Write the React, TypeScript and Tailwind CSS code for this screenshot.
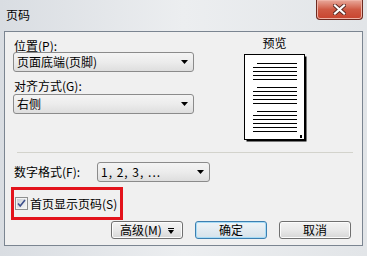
import React from "react";

const FONT = { fontFamily: '"Noto Sans CJK SC", "Noto Sans", sans-serif' };

function DropArrow() {
  return (
    <svg width="7" height="4" viewBox="0 0 7 4" className="shrink-0">
      <path d="M0 0h7L3.5 4z" fill="#000" />
    </svg>
  );
}

function Combo({ text, className = "" }: { text: string; className?: string }) {
  return (
    <div
      className={`flex h-[20px] items-center justify-between rounded-[3px] border border-[#8b8b8b] bg-gradient-to-b from-[#f4f4f4] via-[#ececec] to-[#dedede] pl-[3px] pr-[5px] text-[12px] leading-[12px] text-black ${className}`}
    >
      <span>{text}</span>
      <DropArrow />
    </div>
  );
}

function Button({ children, primary }: { children: React.ReactNode; primary?: boolean }) {
  return (
    <div
      className={`flex h-[18px] w-[72px] items-center justify-center gap-[6px] rounded-[3px] border text-[12px] leading-[12px] text-black ${
        primary
          ? "border-[#3c7fb1] bg-gradient-to-b from-[#eef4f8] to-[#d6e2ea] shadow-[inset_0_0_0_1px_#a7dcf6]"
          : "border-[#707070] bg-gradient-to-b from-[#f3f3f3] via-[#e9e9e9] to-[#d6d6d6] shadow-[inset_0_0_0_1px_#fcfcfc]"
      }`}
    >
      {children}
    </div>
  );
}

function PreviewPage() {
  const groups = [
    [9, 13, 17, 21, 25],
    [33, 37, 41, 45, 49],
    [57, 61, 65, 69, 73, 77],
  ];
  return (
    <svg width="63" height="88" viewBox="0 0 63 88">
      <rect x="2.5" y="2.5" width="60" height="85" fill="#000" />
      <rect x="0.5" y="0.5" width="60" height="85" fill="#fff" stroke="#000" />
      {groups.map((g, gi) =>
        g.map((y, i) => (
          <line key={`${gi}-${i}`} x1={i === 0 ? 13 : 9} x2="53" y1={y + 0.5} y2={y + 0.5} stroke="#000" />
        ))
      )}
      <rect x="56" y="81" width="2" height="3" fill="#000" />
    </svg>
  );
}

function Checkbox() {
  return (
    <svg width="13" height="13" viewBox="0 0 13 13" className="shrink-0">
      <defs>
        <linearGradient id="cb" x1="0" y1="0" x2="1" y2="1">
          <stop offset="0" stopColor="#cbcfd5" />
          <stop offset="1" stopColor="#f6f6f6" />
        </linearGradient>
      </defs>
      <rect x="0.5" y="0.5" width="12" height="12" fill="#f4f4f4" stroke="#8e8f8f" />
      <rect x="2" y="2" width="9" height="9" fill="url(#cb)" />
      <path d="M3 6.5l2.2 2.5L10 3" fill="none" stroke="#3e4f8c" strokeWidth="1.6" />
    </svg>
  );
}

function AdvArrow() {
  return (
    <svg width="6" height="7" viewBox="0 0 6 7">
      <path d="M0 1.5h6" stroke="#000" />
      <path d="M0 3h6L3 7z" fill="#000" />
    </svg>
  );
}

export default function App() {
  return (
    <div
      className="flex h-[256px] w-[367px] flex-col overflow-hidden bg-gradient-to-r from-[#d9dde2] via-[#eceef0] to-[#e2e5e8]"
      style={FONT}
    >
      <div className="flex h-[31px] items-start justify-between pl-[6px] pr-[4px]">
        <span className="mt-[9px] text-[12px] leading-[12px] text-black">页码</span>
        <div className="flex h-[20px] w-[47px] items-center justify-center rounded-b-[4px] border border-t-0 border-[#6d2a20] bg-gradient-to-b from-[#e8a99c] via-[#cf5a44] to-[#c8432e] shadow-[inset_0_0_0_1px_#efb3a6]">
          <svg width="13" height="11" viewBox="0 0 13 11">
            <path d="M2 1.5l9 8M11 1.5l-9 8" stroke="#5a2a24" strokeWidth="4" strokeLinecap="square" />
            <path d="M2 1.5l9 8M11 1.5l-9 8" stroke="#fff" strokeWidth="2.2" strokeLinecap="square" />
          </svg>
        </div>
      </div>

      <div className="ml-[4px] flex h-[215px] w-[359px] flex-col border border-[#7b8591] bg-[#f0f0f0] text-black">
        <div className="flex h-[120px]">
          <div className="flex w-[189px] flex-col pl-[8px] pt-[8px]">
            <span className="pl-[1px] text-[12px] leading-[12px]">位置(P):</span>
            <Combo text="页面底端(页脚)" className="w-[181px]" />
            <span className="mt-[8px] pl-[1px] text-[12px] leading-[12px]">对齐方式(G):</span>
            <Combo text="右侧" className="mt-[2px] w-[181px]" />
          </div>
          <div className="ml-[50px] flex w-[63px] flex-col items-start pt-[5px]">
            <span className="w-[61px] text-center text-[12px] leading-[12px]">预览</span>
            <div className="mt-[5px]">
              <PreviewPage />
            </div>
          </div>
        </div>

        <div className="ml-[12px] h-px w-[336px] bg-[#d3d3cc]" />

        <div className="mt-[9px] flex items-center pl-[9px]">
          <span className="w-[83px] text-[12px] leading-[12px]">数字格式(F):</span>
          <Combo text="1, 2, 3, ..." className="w-[113px] tracking-[1px]" />
        </div>

        <div className="ml-[6px] mt-[5px] flex h-[33px] w-[112px] items-center gap-[2px] border-[3px] border-[#e3131b] pl-[1px]">
          <Checkbox />
          <span className="whitespace-nowrap text-[12px] leading-[12px]">首页显示页码(S)</span>
        </div>

        <div className="mt-[1px] flex gap-[12px] pl-[106px]">
          <Button>
            <span>高级(M)</span>
            <AdvArrow />
          </Button>
          <Button primary>确定</Button>
          <Button>取消</Button>
        </div>
      </div>
    </div>
  );
}
